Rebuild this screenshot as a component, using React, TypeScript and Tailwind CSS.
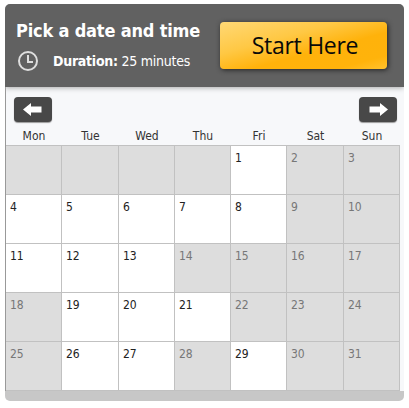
const days = ['Mon', 'Tue', 'Wed', 'Thu', 'Fri', 'Sat', 'Sun'];
const available = new Set([1, 4, 5, 6, 7, 8, 11, 12, 13, 19, 20, 21, 26, 27, 29]);
const columns = 'grid grid-cols-[56px_57px_56px_56px_56px_57px_56px]';

function Arrow({ right = false }: { right?: boolean }) {
  return (
    <button
      aria-label={right ? 'Next month' : 'Previous month'}
      className="flex h-[25px] w-[38px] items-center justify-center rounded-[4px] bg-[#484848] shadow-[0_1px_1px_#999]"
    >
      <svg width="20" height="14" viewBox="0 0 20 14" className={right ? '-scale-x-100' : ''}>
        <path d="M0 6.5 8 0V3.5h10.5v6H8V13Z" fill="#fff" />
      </svg>
    </button>
  );
}

export default function App() {
  return (
    <div className="h-[408px] w-[409px] overflow-hidden bg-white pt-1 pl-[5px] font-['DejaVu_Sans_Condensed','DejaVu_Sans',sans-serif] [font-stretch:condensed]">
      <div className="flex h-[397px] w-[399px] flex-col overflow-hidden rounded-[5px] bg-[#f7f8fa]">
        <header className="z-10 flex h-[83px] shrink-0 bg-[#616161] text-white shadow-[0_1px_5px_#aaa]">
          <div className="w-[214px] shrink-0 pt-[15px] pl-[11px]">
            <h1 className="text-[18px] leading-[24px] font-bold tracking-[-0.18px] whitespace-nowrap">Pick a date and time</h1>
            <div className="mt-[7px] flex h-[22px] items-center">
              <svg width="22" height="22" viewBox="0 0 22 22" fill="none" stroke="#dedede" strokeWidth="2" className="ml-px">
                <circle cx="11" cy="11" r="9" />
                <path d="M11 5v7h5" />
              </svg>
              <p className="ml-[14px] text-[14px] leading-[20px] tracking-[-0.26px] whitespace-nowrap">
                <b>Duration:</b> 25 minutes
              </p>
            </div>
          </div>
          <button className="mt-[18px] ml-[1px] h-[47px] w-[167px] shrink-0 rounded-[4px] bg-[linear-gradient(165deg,#ffd875_0%,#ffc844_35%,#ffb20b_60%,#ffb30b_85%,#ffc22d_100%)] pl-[3px] [font-family:'Open_Sans',sans-serif] text-[23px] leading-[47px] tracking-[-0.3px] text-[#090909] shadow-[1px_1px_5px_#222] [font-stretch:100%]">
            Start Here
          </button>
        </header>
        <main className="flex h-[304px] shrink-0 flex-col border-l border-[#999]">
          <div className="flex h-[41px] shrink-0 justify-between pt-[10px] pr-[7px] pl-2">
            <Arrow />
            <Arrow right />
          </div>
          <div className={`${columns} h-[17px] shrink-0 text-center text-[12px] leading-[16px] text-[#333]`}>
            {days.map((day) => <span key={day}>{day}</span>)}
          </div>
          <div className={`${columns} h-[246px] w-[394px] shrink-0 auto-rows-[49px] border-t border-[#c1c1c1]`}>
            {Array.from({ length: 35 }, (_, index) => {
              const date = index - 3;
              const open = available.has(date);
              return (
                <div
                  key={index}
                  className={`border-r border-b border-[#c1c1c1] pt-[4px] pl-[4px] text-[12px] leading-[16px] ${open ? 'bg-white text-[#222]' : 'bg-[#ddd] text-[#777]'}`}
                >
                  {date > 0 ? date : ''}
                </div>
              );
            })}
          </div>
        </main>
        <footer className="h-[10px] shrink-0 bg-[#c7c7c7]" />
      </div>
    </div>
  );
}
